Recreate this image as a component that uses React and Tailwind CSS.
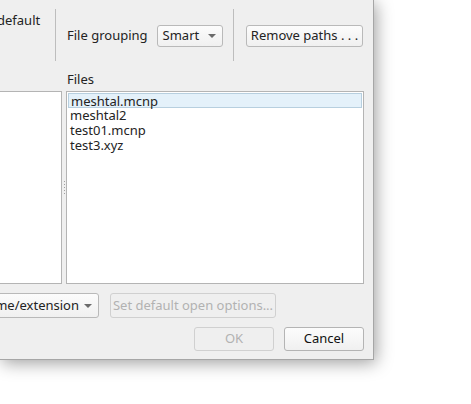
import React from "react";

const Arrow = () => (
  <svg width="8" height="4" viewBox="0 0 8 4" className="shrink-0">
    <path d="M0 0 L8 0 L4 4 Z" fill="#6b6b6b" />
  </svg>
);

export default function App() {
  const files = ["meshtal.mcnp", "meshtal2", "test01.mcnp", "test3.xyz"];
  return (
    <div
      className="w-[471px] h-[404px] bg-white overflow-hidden text-[13px] text-[#232323]"
      style={{ fontFamily: '"Noto Sans", "Open Sans", sans-serif' }}
    >
      <div className="w-[374px] h-[360px] bg-[#efefef] border-r border-b border-[#a6a6a6] shadow-[2px_3px_16px_rgba(0,0,0,0.38)] flex flex-col">
        {/* top row */}
        <div className="flex h-[52px] mt-[9px]">
          <div className="w-[55px] overflow-hidden">
            <div className="-ml-[3px] pt-[2px] leading-[18px] whitespace-nowrap">default</div>
          </div>
          <div className="w-px bg-[#bdbdbd]" />
          <div className="w-[177px] flex items-center pl-[11px] pt-[1px]">
            <span className="whitespace-nowrap">File grouping</span>
            <div className="ml-[9px] w-[66px] h-[22px] rounded-[3px] border border-[#b9b9b9] bg-gradient-to-b from-[#fcfcfc] to-[#f0f0f0] flex items-center justify-between pl-[5px] pr-[6px]">
              <span>Smart</span>
              <Arrow />
            </div>
          </div>
          <div className="w-px bg-[#bdbdbd]" />
          <div className="flex items-center pl-[12px] pt-[1px]">
            <div className="w-[117px] h-[22px] rounded-[3px] border border-[#b9b9b9] bg-gradient-to-b from-[#fcfcfc] to-[#f0f0f0] flex items-center justify-center whitespace-nowrap">
              Remove paths . . .
            </div>
          </div>
        </div>

        {/* Files label */}
        <div className="pl-[67px] mt-[9px] leading-[18px]">Files</div>

        {/* lists */}
        <div className="flex mt-[3px] h-[193px]">
          <div className="w-[62px] h-full bg-white border border-[#b4b4b4] border-l-0" />
          <div className="w-[4px] flex items-center justify-center">
            <div className="flex flex-col gap-[2px]">
              <div className="w-px h-px bg-[#a0a0a0]" />
              <div className="w-px h-px bg-[#a0a0a0]" />
              <div className="w-px h-px bg-[#a0a0a0]" />
              <div className="w-px h-px bg-[#a0a0a0]" />
              <div className="w-px h-px bg-[#a0a0a0]" />
            </div>
          </div>
          <div className="w-[298px] h-full bg-white border border-[#b4b4b4] p-px">
            {files.map((f, i) => (
              <div
                key={f}
                className={
                  "h-[15px] leading-[15px] pl-[2px] whitespace-nowrap " +
                  (i === 0 ? "bg-[#e4f1fa] border border-[#b7cfdf] pl-[1px] leading-[13px]" : "")
                }
              >
                {f}
              </div>
            ))}
          </div>
        </div>

        {/* bottom combos */}
        <div className="flex mt-[9px] h-[25px]">
          <div className="-ml-[10px] w-[109px] h-full rounded-[3px] border border-[#b9b9b9] bg-gradient-to-b from-[#fcfcfc] to-[#f0f0f0] flex items-center justify-end gap-[5px] pr-[6px] overflow-hidden whitespace-nowrap">
            <span>by name/extension</span>
            <Arrow />
          </div>
          <div className="ml-[11px] w-[166px] h-full rounded-[3px] border border-[#d0d0d0] bg-[#efefef] flex items-center justify-center text-[#b2b2b2] whitespace-nowrap">
            Set default open options...
          </div>
        </div>

        {/* OK / Cancel */}
        <div className="flex mt-[9px] h-[24px] pl-[194px]">
          <div className="w-[80px] h-full rounded-[3px] border border-[#d0d0d0] bg-[#efefef] flex items-center justify-center text-[#b2b2b2]">
            OK
          </div>
          <div className="ml-[10px] w-[80px] h-full rounded-[3px] border border-[#b4b4b4] bg-gradient-to-b from-[#fcfcfc] to-[#f0f0f0] flex items-center justify-center text-[#111]">
            Cancel
          </div>
        </div>
      </div>
    </div>
  );
}
